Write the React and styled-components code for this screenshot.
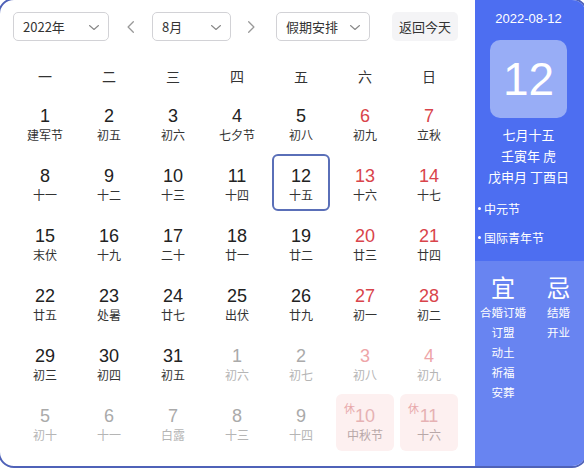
import React from "react";
import styled, { createGlobalStyle } from "styled-components";

const GlobalStyle = createGlobalStyle`
  html, body {
    margin: 0;
    padding: 0;
    background: #ffffff;
    overflow: hidden;
  }
  body {
    font-family: "Liberation Sans", "Noto Sans CJK SC", sans-serif;
  }
`;

const Card = styled.div`
  box-sizing: border-box;
  width: 590px;
  height: 470px;
  margin: -2px 0 0 -2px;
  border: 2px solid #4f62b8;
  border-radius: 16px;
  overflow: hidden;
  display: flex;
  background: #fff;
`;

const Main = styled.div`
  width: 475px;
  flex-shrink: 0;
  display: flex;
  flex-direction: column;
`;

const Toolbar = styled.div`
  display: flex;
  align-items: center;
  padding: 12px 0 0 13px;
  height: 29px;
`;

const Select = styled.div`
  box-sizing: border-box;
  width: ${(p) => p.$w}px;
  height: 29px;
  margin-left: ${(p) => p.$ml || 0}px;
  border: 1px solid #d2d2d6;
  border-radius: 5px;
  display: flex;
  align-items: center;
  justify-content: space-between;
  padding: 0 8px 0 9px;
  font-size: 13px;
  color: #333;
  font-family: "Noto Sans CJK SC", sans-serif;
`;

const ArrowBtn = styled.div`
  width: ${(p) => p.$w}px;
  height: 29px;
  display: flex;
  align-items: center;
  justify-content: center;
`;

const TodayBtn = styled.div`
  width: 66px;
  height: 29px;
  margin-left: 22px;
  border-radius: 5px;
  background: #f4f4f6;
  color: #333;
  font-size: 13px;
  display: flex;
  align-items: center;
  justify-content: center;
  font-family: "Noto Sans CJK SC", sans-serif;
`;

const WeekRow = styled.div`
  display: grid;
  grid-template-columns: repeat(7, 64px);
  padding-left: 13px;
  margin-top: 19px;
  height: 32px;
  align-items: center;
`;

const WeekDay = styled.div`
  text-align: center;
  font-size: 14px;
  color: #333;
  font-family: "Noto Sans CJK SC", sans-serif;
`;

const DayGrid = styled.div`
  display: grid;
  grid-template-columns: repeat(7, 64px);
  grid-auto-rows: 60px;
  padding-left: 13px;
`;

const Cell = styled.div`
  display: flex;
  align-items: center;
  justify-content: center;
`;

const tones = {
  normal: { num: "#222", lunar: "#333" },
  weekend: { num: "#d9444b", lunar: "#333" },
  faded: { num: "#aaa", lunar: "#b5b5b5" },
  fadedWeekend: { num: "#eea5a8", lunar: "#b5b5b5" },
  holiday: { num: "#e6b2b4", lunar: "#b8a8a8" },
};

const DayBox = styled.div`
  position: relative;
  box-sizing: border-box;
  width: 58px;
  height: 57px;
  padding-top: 6px;
  border-radius: 6px;
  border: 2px solid ${(p) => (p.$selected ? "#5a6fb8" : "transparent")};
  background: ${(p) => (p.$tone === "holiday" ? "#fdf0f0" : "transparent")};
  display: flex;
  flex-direction: column;
  align-items: center;
  justify-content: center;
`;

const DayNum = styled.div`
  font-size: 18px;
  line-height: 20px;
  color: ${(p) => tones[p.$tone].num};
`;

const Lunar = styled.div`
  font-size: 12px;
  line-height: 18px;
  color: ${(p) => tones[p.$tone].lunar};
  font-family: "Noto Sans CJK SC", sans-serif;
`;

const RestTag = styled.span`
  position: absolute;
  left: 6px;
  top: 4px;
  font-size: 11px;
  color: #e8a9ab;
  font-family: "Noto Sans CJK SC", sans-serif;
`;

const Side = styled.div`
  flex: 1;
  display: flex;
  flex-direction: column;
  color: #fff;
  font-family: "Noto Sans CJK SC", sans-serif;
`;

const SideTop = styled.div`
  background: #4d6ef1;
  height: 261px;
  padding: 9px 4px 0 0;
  box-sizing: border-box;
  display: flex;
  flex-direction: column;
  align-items: center;
`;

const DateText = styled.div`
  font-family: "Liberation Sans", sans-serif;
  font-size: 13px;
  line-height: 20px;
`;

const BigDay = styled.div`
  margin-top: 11px;
  width: 77px;
  height: 78px;
  border-radius: 10px;
  background: #98adf6;
  display: flex;
  align-items: center;
  justify-content: center;
  font-family: "Liberation Sans", sans-serif;
  font-size: 46px;
`;

const LunarLine = styled.div`
  font-size: 13px;
  line-height: 21px;
  margin-top: ${(p) => p.$mt || 0}px;
`;

const Festivals = styled.div`
  align-self: stretch;
  padding-left: 3px;
  margin-top: 7px;
`;

const Festival = styled.div`
  font-size: 12px;
  line-height: 29px;
  display: flex;
  align-items: center;
  gap: 3px;
`;

const Dot = styled.span`
  width: 3px;
  height: 3px;
  border-radius: 50%;
  background: #fff;
`;

const SideBottom = styled.div`
  flex: 1;
  background: #6884f1;
  display: grid;
  grid-template-columns: 56px 1fr;
  align-items: start;
  padding-top: 11px;
`;

const Column = styled.div`
  display: flex;
  flex-direction: column;
  align-items: center;
`;

const Big = styled.div`
  font-size: 24px;
  line-height: 30px;
  font-weight: 400;
`;

const Item = styled.div`
  font-size: 11.5px;
  line-height: 20px;
`;

const Chevron = ({ dir = "down", color = "#888", size = 12 }) => {
  const d = {
    down: "M1.5 4.5 L6 8.5 L10.5 4.5",
    left: "M8 1.5 L3.5 6 L8 10.5",
    right: "M4 1.5 L8.5 6 L4 10.5",
  }[dir];
  return (
    <svg width={size} height={size} viewBox="0 0 12 12" fill="none">
      <path d={d} stroke={color} strokeWidth="1.1" strokeLinecap="round" strokeLinejoin="round" />
    </svg>
  );
};

const weekDays = ["一", "二", "三", "四", "五", "六", "日"];

const raw = [
  ["1", "建军节"], ["2", "初五"], ["3", "初六"], ["4", "七夕节"], ["5", "初八"], ["6", "初九"], ["7", "立秋"],
  ["8", "十一"], ["9", "十二"], ["10", "十三"], ["11", "十四"], ["12", "十五"], ["13", "十六"], ["14", "十七"],
  ["15", "末伏"], ["16", "十九"], ["17", "二十"], ["18", "廿一"], ["19", "廿二"], ["20", "廿三"], ["21", "廿四"],
  ["22", "廿五"], ["23", "处暑"], ["24", "廿七"], ["25", "出伏"], ["26", "廿九"], ["27", "初一"], ["28", "初二"],
  ["29", "初三"], ["30", "初四"], ["31", "初五"], ["1", "初六"], ["2", "初七"], ["3", "初八"], ["4", "初九"],
  ["5", "初十"], ["6", "十一"], ["7", "白露"], ["8", "十三"], ["9", "十四"], ["10", "中秋节"], ["11", "十六"],
];

const days = raw.map(([num, lunar], i) => {
  const weekend = i % 7 >= 5;
  const faded = i >= 31;
  let tone = "normal";
  if (i >= 40) tone = "holiday";
  else if (faded) tone = weekend ? "fadedWeekend" : "faded";
  else if (weekend) tone = "weekend";
  return { num, lunar, tone, selected: i === 11, rest: i >= 40 };
});

export default function App() {
  return (
    <>
      <GlobalStyle />
      <Card>
        <Main>
          <Toolbar>
            <Select $w={96}>
              <span>2022年</span>
              <Chevron />
            </Select>
            <ArrowBtn $w={43}>
              <Chevron dir="left" color="#999" size={14} />
            </ArrowBtn>
            <Select $w={79}>
              <span>8月</span>
              <Chevron />
            </Select>
            <ArrowBtn $w={40}>
              <Chevron dir="right" color="#999" size={14} />
            </ArrowBtn>
            <Select $w={94} $ml={5}>
              <span>假期安排</span>
              <Chevron />
            </Select>
            <TodayBtn>返回今天</TodayBtn>
          </Toolbar>
          <WeekRow>
            {weekDays.map((w) => (
              <WeekDay key={w}>{w}</WeekDay>
            ))}
          </WeekRow>
          <DayGrid>
            {days.map((d, i) => (
              <Cell key={i}>
                <DayBox $selected={d.selected} $tone={d.tone}>
                  {d.rest && <RestTag>休</RestTag>}
                  <DayNum $tone={d.tone}>{d.num}</DayNum>
                  <Lunar $tone={d.tone}>{d.lunar}</Lunar>
                </DayBox>
              </Cell>
            ))}
          </DayGrid>
        </Main>
        <Side>
          <SideTop>
            <DateText>2022-08-12</DateText>
            <BigDay>12</BigDay>
            <LunarLine $mt={6}>七月十五</LunarLine>
            <LunarLine>壬寅年 虎</LunarLine>
            <LunarLine>戊申月 丁酉日</LunarLine>
            <Festivals>
              <Festival><Dot />中元节</Festival>
              <Festival><Dot />国际青年节</Festival>
            </Festivals>
          </SideTop>
          <SideBottom>
            <Column>
              <Big>宜</Big>
              <Item>合婚订婚</Item>
              <Item>订盟</Item>
              <Item>动土</Item>
              <Item>祈福</Item>
              <Item>安葬</Item>
            </Column>
            <Column>
              <Big>忌</Big>
              <Item>结婚</Item>
              <Item>开业</Item>
            </Column>
          </SideBottom>
        </Side>
      </Card>
    </>
  );
}
